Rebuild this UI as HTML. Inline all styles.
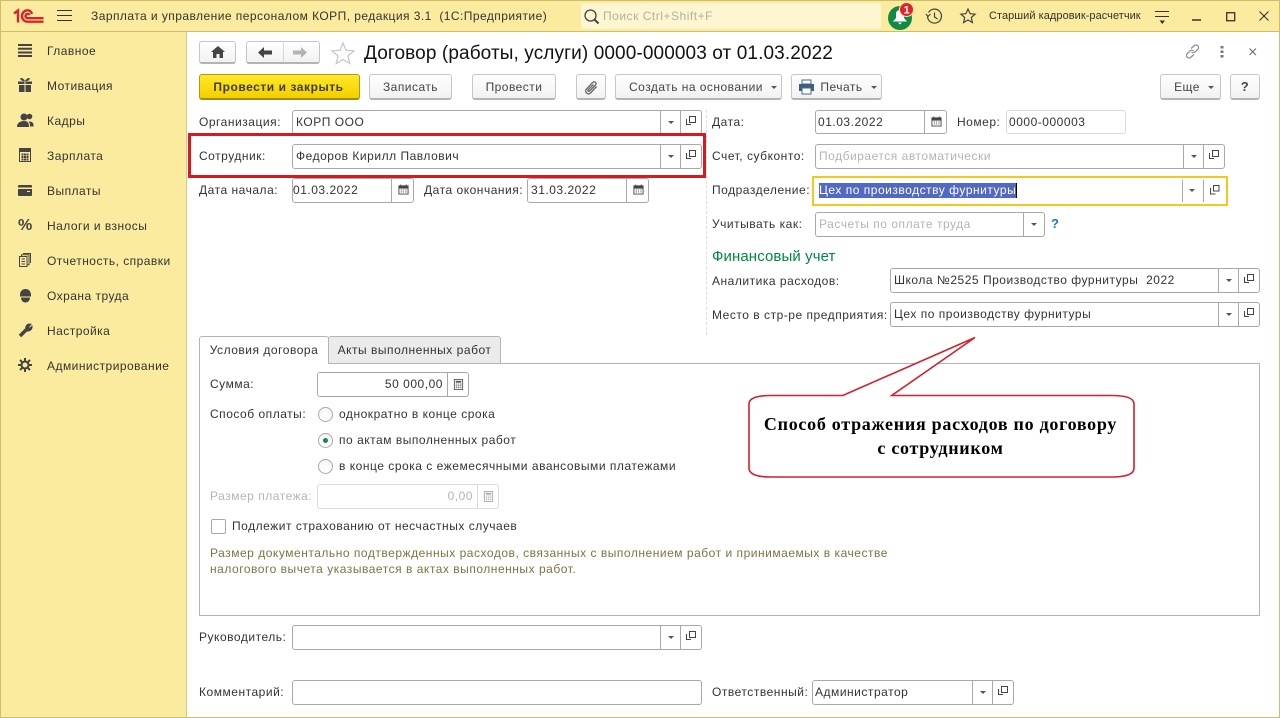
<!DOCTYPE html>
<html lang="ru"><head><meta charset="utf-8"><title>Договор</title>
<style>
html,body{margin:0;padding:0;width:1280px;height:718px;overflow:hidden;background:#fff}
body{position:relative;font:12px/16px "Liberation Sans",Arial,sans-serif;letter-spacing:.52px;color:#333}
svg{position:absolute;overflow:visible}
.t{position:absolute;white-space:nowrap;line-height:16px}
.box{position:absolute;box-sizing:border-box}
.f{position:absolute;box-sizing:border-box;border:1px solid #a8a8a8;border-radius:3px;background:#fff;white-space:nowrap;line-height:23px;padding-left:3px;color:#333}
.f.l{border-color:#dadada}
.g{color:#b4b4b4}
.ar,.op,.cal,.calc{position:absolute;top:0;bottom:0;border-left:1px solid #a8a8a8;box-sizing:border-box}
.ar{right:20px;width:21px}
.ar::after{content:"";position:absolute;left:7px;top:10px;border:3px solid transparent;border-top:3.5px solid #555;border-bottom:0}
.op{right:0;width:21px}
.op::before{content:"";position:absolute;left:5px;top:8px;width:4px;height:5px;border-left:1px solid #444;border-bottom:1px solid #444}
.op::after{content:"";position:absolute;left:8px;top:5px;width:5px;height:5px;border:1px solid #444;background:#fff}
.cal{right:0;width:22px}
.calc{right:0;width:21px}
.btn{position:absolute;box-sizing:border-box;top:74px;height:26px;border:1px solid #c6c6c6;border-bottom:2px solid #b4b4b4;border-radius:3px;background:linear-gradient(#fff,#f2f2f2);text-align:center;line-height:24px;color:#444;white-space:nowrap;letter-spacing:.47px}
.tri{display:inline-block;border:3px solid transparent;border-top:3.5px solid #555;border-bottom:0;margin-left:8px;vertical-align:2px}
.s{position:absolute;left:47px;white-space:nowrap;line-height:16px;color:#333;letter-spacing:.47px}
.r{position:absolute;left:318px;width:15px;height:15px;box-sizing:border-box;border:1px solid #a8a8a8;border-radius:50%;background:linear-gradient(#f6f6f6,#fff)}
</style></head><body>

<svg width="0" height="0" style="position:absolute">
<defs>
<symbol id="cal" viewBox="0 0 12 12"><path d="M1 2h10v9H1z" fill="none" stroke="#444" stroke-width="1"/><path d="M1 2h10v3H1z" fill="#444"/><path d="M3 0.5v2M9 0.5v2" stroke="#444"/><path d="M3 6.5h1.400M5.300 6.500h1.400M8 6.500h1.400M3 8.700h1.400M5.300 8.700h1.400M8 8.700h1.400" stroke="#555"/></symbol>
<symbol id="calc" viewBox="0 0 12 12"><path d="M1.500 .5h9v11h-9z" fill="none" stroke="currentColor"/><path d="M3 2h6v2H3z" fill="currentColor"/><path d="M3 5.500h1.500M5.300 5.500h1.500M7.600 5.500h1.500M3 7.500h1.500M5.300 7.500h1.500M7.600 7.500h1.500M3 9.500h1.500M5.300 9.500h1.500M7.600 9.500h1.500" stroke="currentColor"/></symbol>
</defs></svg>

<!-- frame -->
<div class="box" style="left:0;top:0;width:1280px;height:32px;background:#fbeb9e;border:1px solid #cfbd6e"></div>
<div class="box" style="left:0;top:32px;width:187px;height:686px;background:#fbeb9e;border-left:1px solid #cfbd6e;border-right:1px solid #d9c97f;border-bottom:1px solid #cfbd6e"></div>
<div class="box" style="left:187px;top:717px;width:1093px;height:1px;background:#cfbd6e"></div>
<div class="box" style="left:1279px;top:32px;width:1px;height:686px;background:#cfbd6e"></div>

<!-- logo 1C -->
<svg style="left:14px;top:9px" width="30" height="14" viewBox="0 0 30 14" fill="none" stroke="#d9232a" stroke-width="2.400"><path d="M0 4.500 4 1.500V13.500"/><path d="M18 5C17.200 2.500 15.500 1.300 13.500 1.300 10.500 1.300 8 3.800 8 7s2.500 5.700 5.500 5.700H29.500"/><path d="M15.500 6C15 5.200 14.300 4.900 13.600 4.900 12.400 4.900 11.500 5.800 11.500 7s.9 2.200 2.100 2.200H29.500"/></svg>
<svg style="left:57px;top:10px" width="15" height="12"><path d="M0 .5h15M0 5.500h15M0 10.500h15" stroke="#333"/></svg>
<div class="t" style="left:91px;top:8px;letter-spacing:.45px">Зарплата и управление персоналом КОРП, редакция 3.1&nbsp; (1С:Предприятие)</div>

<!-- search -->
<div class="box" style="left:581px;top:3px;width:300px;height:26px;background:#fdf6d0;border-radius:3px"></div>
<svg style="left:584px;top:9px" width="16" height="16" fill="none" stroke="#444"><circle cx="6.500" cy="6.500" r="5.500" stroke-width="1.300"/><path d="M10.500 10.500 14.500 14.500" stroke-width="2"/></svg>
<div class="t" style="left:603px;top:8px;color:#b3b0a0">Поиск Ctrl+Shift+F</div>

<!-- bell -->
<svg style="left:888px;top:3px" width="28" height="26" viewBox="0 0 28 26"><circle cx="12" cy="15" r="12" fill="#108a45"/><path d="M12 7c-3 0-4 2-4 4v4l-3 3.500h14L16 15v-4c0-2-1-4-4-4zM10 19.500h4l-2 2z" fill="#fff"/><circle cx="18.500" cy="6.500" r="7" fill="#e2232b" stroke="#fbeb9e"/><text x="18.500" y="10.500" text-anchor="middle" font-family="Liberation Sans" font-weight="bold" font-size="11" fill="#fff" letter-spacing="0">1</text></svg>
<!-- history -->
<svg style="left:926px;top:8px" width="17" height="17" fill="none" stroke="#444" stroke-width="1.200"><path d="M2.500 4.500A7 7 0 1 1 1.500 8.500"/><path d="M0 6l2 2.500L4.500 6"/><path d="M8.500 4.500v4.500l3 2"/></svg>
<!-- star -->
<svg style="left:960px;top:8px" width="16" height="16" fill="none" stroke="#444" stroke-width="1.200"><path d="M8 1l2.100 4.700 5 .5-3.800 3.300 1.100 5L8 12l-4.400 2.500 1.100-5L.9 6.200l5-.5z"/></svg>
<div class="t" style="left:989px;top:8px;font-size:11px;letter-spacing:.05px">Старший кадровик-расчетчик</div>
<svg style="left:1155px;top:11px" width="15" height="14"><path d="M0 .5h14M0 5.500h14" stroke="#333"/><path d="M4.500 9.500h5.500l-2.700 3.500z" fill="#333"/></svg>
<svg style="left:1192px;top:19px" width="10" height="2"><path d="M0 1h9" stroke="#333" stroke-width="1.500"/></svg>
<svg style="left:1226px;top:12px" width="11" height="11" fill="none" stroke="#333" stroke-width="1.300"><rect x=".7" y=".7" width="8" height="8"/></svg>
<svg style="left:1259px;top:11px" width="12" height="12" stroke="#333" stroke-width="1.100"><path d="M.5.500l9 9M9.500.5l-9 9"/></svg>

<!-- sidebar -->
<svg style="left:18px;top:44px" width="15" height="13" fill="#444"><path d="M0 0h14v2H0zM0 3.800h14v2H0zM0 7.500h14v2H0zM0 11h14v2H0z"/></svg>
<div class="s" style="top:43px">Главное</div>
<svg style="left:18px;top:78px" width="15" height="14" fill="#444"><path d="M0 3.500h6.500V6H0zM7.500 3.500H14V6H7.500zM1 7h5.500v7H1zM7.500 7H13v7H7.500zM3 0c2 0 3.500 2 4 3 .5-1 2-3 4-3 1.500 0 1 3-4 3.300C2 3 1.500 0 3 0z"/></svg>
<div class="s" style="top:78px">Мотивация</div>
<svg style="left:17px;top:113px" width="17" height="15" fill="#444"><circle cx="7" cy="4" r="3.500"/><circle cx="12.500" cy="3.500" r="2.800"/><path d="M0 14c0-4 3-6 7-6s5 2 5 6zM13 13.500h3.500c.5-3-1-5-4-5l-1 0c1.500 1.500 1.500 3 1.500 5z"/></svg>
<div class="s" style="top:113px">Кадры</div>
<svg style="left:19px;top:148px" width="12" height="14"><path d="M.5.500h11v13H.5z" fill="#fff0" stroke="#444"/><path d="M1 1h10v3H1zM2.500 5.500h2v2h-2zM5 5.500h2v2H5zM7.500 5.500h2v2h-2zM2.500 8h2v2h-2zM5 8h2v2H5zM7.500 8h2v2h-2zM2.500 10.500h2v2h-2zM5 10.500h2v2H5zM7.500 10.500h2v2h-2z" fill="#444"/></svg>
<div class="s" style="top:148px">Зарплата</div>
<svg style="left:18px;top:185px" width="15" height="11" fill="#444"><path d="M1 0h12a1 1 0 0 1 1 1v1.500H0V1a1 1 0 0 1 1-1zM0 4h14v6a1 1 0 0 1-1 1H1a1 1 0 0 1-1-1zM9 6v1h3V6z" fill-rule="evenodd"/></svg>
<div class="s" style="top:183px">Выплаты</div>
<div class="t" style="left:18px;top:218px;font-size:16px;font-weight:bold;color:#444;letter-spacing:0">%</div>
<div class="s" style="top:218px">Налоги и взносы</div>
<svg style="left:19px;top:253px" width="12" height="14" fill="none" stroke="#444"><path d="M.5 3.500h7.500v10H.5zM2.500 6h3.500M2.500 8.500h3.500M2.500 11h3.500"/><path d="M2.500 3V1.800H10v10H8.500M4.500 1V.5h7v9.500"/></svg>
<div class="s" style="top:253px">Отчетность, справки</div>
<svg style="left:19px;top:289px" width="13" height="14" fill="#444"><path d="M6.500 0C3 0 1 2.500 1 6v1.500h11V6C12 2.500 10 0 6.500 0zM2 8.500h9c0 3-2 5-4.500 5S2 11.500 2 8.500z"/></svg>
<div class="s" style="top:288px">Охрана труда</div>
<svg style="left:18px;top:323px" width="15" height="15" fill="none" stroke="#444"><path d="M2 13 8.500 6.500" stroke-width="3.500"/><path d="M8 7.500C7 5 8 1.500 11 1c.8-.1 1.500 0 2 .2L10.500 4l1 1.500 2.500-2.400C14.500 6 12 8.500 9.500 8" fill="#444" stroke-width="1"/></svg>
<div class="s" style="top:323px">Настройка</div>
<svg style="left:18px;top:358px" width="14" height="14" fill="none" stroke="#444"><circle cx="7" cy="7" r="3.500" stroke-width="2"/><path d="M7 0v3M7 11v3M0 7h3M11 7h3M2 2l2.200 2.200M9.800 9.800 12 12M12 2 9.800 4.200M4.200 9.800 2 12" stroke-width="2"/></svg>
<div class="s" style="left:47px;top:358px">Администрирование</div>

<!-- header row -->
<div class="btn" style="left:199px;top:41px;width:37px;height:23px"></div>
<svg style="left:211px;top:46px" width="14" height="12" fill="#444"><path d="M7 0 14 6h-2v6H8.500V8h-3v4H2V6H0z"/></svg>
<div class="btn" style="left:246px;top:41px;width:74px;height:23px"></div>
<div class="box" style="left:283px;top:42px;width:1px;height:20px;background:#d8d8d8"></div>
<svg style="left:258px;top:47px" width="14" height="11" fill="#444"><path d="M0 5.500 6 0v3.500h8v4H6V11z"/></svg>
<svg style="left:293px;top:47px" width="14" height="11" fill="#b4b4b4"><path d="M14 5.500 8 0v3.500H0v4h8V11z"/></svg>
<svg style="left:331px;top:42px" width="24" height="22" fill="none" stroke="#c8c8c8" stroke-width="1.300"><path d="M12 1l3 7.300 8 .6-6.100 5.100 1.900 7.500L12 17.500 5.200 21.500 7.100 14 1 8.900 9 8.300z"/></svg>
<div class="t" style="left:364px;top:43px;font-size:19px;line-height:22px;color:#111;letter-spacing:.11px">Договор (работы, услуги) 0000-000003 от 01.03.2022</div>
<svg style="left:1185px;top:44px" width="15" height="15" fill="none" stroke="#888" stroke-width="1.200"><path d="M6 4.500 9 1.800a2.500 2.500 0 0 1 3.800 3.500L10 8a2.500 2.500 0 0 1-3.500 0"/><path d="M9 10.500 6 13.200a2.500 2.500 0 0 1-3.800-3.500L5 7a2.500 2.500 0 0 1 3.500 0"/></svg>
<svg style="left:1220px;top:46px" width="4" height="12" fill="#777"><rect x=".5" y="0" width="3" height="2.500"/><rect x=".5" y="4.500" width="3" height="2.500"/><rect x=".5" y="9" width="3" height="2.500"/></svg>
<svg style="left:1249px;top:48px" width="8" height="8" stroke="#666"><path d="M.5.500l6.500 6.500M7 .5.500 7"/></svg>

<!-- toolbar -->
<div class="btn" style="left:199px;width:161px;background:linear-gradient(#ffe926,#f3cf00);border:1px solid #b09a10;border-bottom:2px solid #a08c10;font-weight:bold;color:#403c20;letter-spacing:.55px;padding-right:2px">Провести и закрыть</div>
<div class="btn" style="left:369px;width:83px">Записать</div>
<div class="btn" style="left:472px;width:84px">Провести</div>
<div class="btn" style="left:576px;width:30px"></div>
<svg style="left:584px;top:80px" width="14" height="15" fill="none" stroke="#666" stroke-width="1.300"><path d="M12.500 6.500 6.500 13a2.800 2.800 0 0 1-4-4L9 2.200a1.900 1.900 0 0 1 2.700 2.600L5.500 11a.9.9 0 0 1-1.300-1.300L9.500 4.500"/></svg>
<div class="btn" style="left:615px;width:167px;padding-left:9px">Создать на основании<span class="tri"></span></div>
<div class="btn" style="left:791px;width:91px;padding-left:24px">Печать<span class="tri"></span></div>
<svg style="left:799px;top:80px" width="15" height="14"><path d="M3 0h9v4H3z" fill="#fff" stroke="#4a6a8a"/><path d="M0 4h15v7H0z" fill="#3d5f80"/><path d="M3 8h9v6H3z" fill="#fff" stroke="#4a6a8a"/></svg>
<div class="btn" style="left:1160px;width:61px;padding-left:7px">Еще<span class="tri"></span></div>
<div class="btn" style="left:1230px;width:30px;font-weight:bold;font-size:13px">?</div>

<!-- left form -->
<div class="t" style="left:199px;top:114px">Организация:</div>
<div class="f" style="left:292px;top:110px;width:410px;height:24px">КОРП ООО<i class="ar"></i><i class="op"></i></div>
<div class="box" style="left:188px;top:133px;width:518px;height:45px;border:3px solid #d9181f"></div>
<div class="t" style="left:199px;top:148px">Сотрудник:</div>
<div class="f" style="left:292px;top:144px;width:410px;height:25px">Федоров Кирилл Павлович<i class="ar"></i><i class="op"></i></div>
<div class="t" style="left:199px;top:182px">Дата начала:</div>
<div class="f" style="left:292px;top:178px;width:122px;height:25px;padding-left:0">01.03.2022<i class="cal"></i></div>
<svg style="left:398px;top:184px" width="11" height="11"><use href="#cal"/></svg>
<div class="t" style="left:424px;top:182px">Дата окончания:</div>
<div class="f" style="left:527px;top:178px;width:122px;height:25px;padding-left:3px">31.03.2022<i class="cal"></i></div>
<svg style="left:633px;top:184px" width="11" height="11"><use href="#cal"/></svg>

<div class="box" style="left:706px;top:110px;width:0;height:225px;border-left:1px dashed #dcdcdc"></div>

<!-- right form -->
<div class="t" style="left:712px;top:114px">Дата:</div>
<div class="f" style="left:815px;top:110px;width:132px;height:24px;padding-left:2px">01.03.2022<i class="cal"></i></div>
<svg style="left:931px;top:116px" width="11" height="11"><use href="#cal"/></svg>
<div class="t" style="left:957px;top:114px">Номер:</div>
<div class="f l" style="left:1006px;top:110px;width:120px;height:24px;padding-left:2px">0000-000003</div>

<div class="t" style="left:712px;top:148px">Счет, субконто:</div>
<div class="f g" style="left:815px;top:144px;width:410px;height:25px;padding-left:3px;color:#b4b4b4">Подбирается автоматически<i class="ar"></i><i class="op"></i></div>

<div class="t" style="left:712px;top:182px">Подразделение:</div>
<div class="box" style="left:812px;top:176px;width:416px;height:30px;border:2px solid #f8c71e;background:#fff"></div>
<div class="box" style="left:819px;top:183px;width:198px;height:15px;background:#5169c2;color:#fff;line-height:15px;white-space:nowrap;border-right:1px solid #000">Цех по производству фурнитуры</div>
<div class="box" style="left:1182px;top:180px;width:1px;height:22px;background:#a8a8a8"></div>
<div class="box" style="left:1203px;top:180px;width:1px;height:22px;background:#a8a8a8"></div>
<div class="box" style="left:1189px;top:189px;border:3px solid transparent;border-top:3.500px solid #555;border-bottom:0"></div>
<svg style="left:1210px;top:185px" width="10" height="10" fill="none" stroke="#444"><path d="M.5 3v6h5"/><path d="M3.500.5h5.500v5.500H3.500z" fill="#fff"/></svg>

<div class="t" style="left:712px;top:216px">Учитывать как:</div>
<div class="f" style="left:815px;top:212px;width:230px;height:25px;color:#b4b4b4">Расчеты по оплате труда<i class="ar" style="right:0"></i></div>
<div class="t" style="left:1051px;top:216px;color:#1878c0;font-weight:bold;font-size:13px">?</div>

<div class="t" style="left:712px;top:249px;color:#00883e;font-size:15px;letter-spacing:.1px">Финансовый учет</div>
<div class="t" style="left:712px;top:273px">Аналитика расходов:</div>
<div class="f" style="left:890px;top:268px;width:370px;height:25px">Школа №2525 Производство фурнитуры&nbsp; 2022<i class="ar"></i><i class="op"></i></div>
<div class="t" style="left:712px;top:307px">Место в стр-ре предприятия:</div>
<div class="f" style="left:890px;top:302px;width:370px;height:25px">Цех по производству фурнитуры<i class="ar"></i><i class="op"></i></div>

<!-- tabs -->
<div class="box" style="left:199px;top:363px;width:1061px;height:253px;border:1px solid #b4b4b4"></div>
<div class="box" style="left:328px;top:336px;width:173px;height:28px;background:#ebebeb;border:1px solid #b4b4b4;border-radius:3px 3px 0 0;text-align:center;line-height:26px">Акты выполненных работ</div>
<div class="box" style="left:199px;top:336px;width:130px;height:28px;background:#fff;border:1px solid #b4b4b4;border-bottom:0;border-radius:3px 3px 0 0;text-align:center;line-height:26px">Условия договора</div>

<div class="t" style="left:210px;top:376px">Сумма:</div>
<div class="f" style="left:317px;top:372px;width:152px;height:25px;padding:0 25px 0 0;text-align:right">50 000,00<i class="calc"></i></div>
<svg style="left:453px;top:379px;color:#555" width="11" height="11"><use href="#calc"/></svg>
<div class="t" style="left:210px;top:406px">Способ оплаты:</div>
<div class="r" style="top:407px"></div><div class="t" style="left:339px;top:406px">однократно в конце срока</div>
<div class="r" style="top:433px"></div><div class="box" style="left:323px;top:438px;width:5px;height:5px;border-radius:50%;background:#108a45"></div><div class="t" style="left:339px;top:432px">по актам выполненных работ</div>
<div class="r" style="top:459px"></div><div class="t" style="left:339px;top:458px">в конце срока с ежемесячными авансовыми платежами</div>
<div class="t" style="left:210px;top:488px;color:#b4b4b4">Размер платежа:</div>
<div class="f l" style="left:317px;top:484px;width:182px;height:25px;padding:0 25px 0 0;text-align:right;color:#b4b4b4">0,00<i class="calc" style="border-color:#dadada"></i></div>
<svg style="left:483px;top:491px;color:#aaa" width="11" height="11"><use href="#calc"/></svg>
<div class="box" style="left:211px;top:519px;width:15px;height:15px;border:1px solid #a8a8a8;border-radius:2px;background:#fff"></div>
<div class="t" style="left:232px;top:518px">Подлежит страхованию от несчастных случаев</div>
<div class="t" style="left:210px;top:545px;color:#7d7342">Размер документально подтвержденных расходов, связанных с выполнением работ и принимаемых в качестве</div>
<div class="t" style="left:210px;top:561px;color:#7d7342">налогового вычета указывается в актах выполненных работ.</div>

<!-- bottom -->
<div class="t" style="left:199px;top:629px">Руководитель:</div>
<div class="f" style="left:292px;top:625px;width:410px;height:25px"><i class="ar"></i><i class="op"></i></div>
<div class="t" style="left:199px;top:684px">Комментарий:</div>
<div class="f" style="left:292px;top:680px;width:410px;height:25px"></div>
<div class="t" style="left:712px;top:684px">Ответственный:</div>
<div class="f" style="left:812px;top:680px;width:202px;height:25px;padding-left:2px">Администратор<i class="ar"></i><i class="op"></i></div>

<!-- callout -->
<svg style="left:0;top:0" width="1280" height="718" fill="none"><path d="M842.700 395.500 975 337.500 891.700 395.500H1112C1126 395.500 1134 398 1134 404V468C1134 474 1126 477 1112 477H771C757 477 749 474 749 468V404C749 398 757 395.500 771 395.500z" fill="#fff" stroke="#d5202a" stroke-width="1.600"/></svg>
<div class="t" style="left:740px;top:412px;width:401px;text-align:center;font:bold 18px/24px 'Liberation Serif',serif;letter-spacing:.72px;color:#000;white-space:normal">Способ отражения расходов по договору<br>с сотрудником</div>

</body></html>
